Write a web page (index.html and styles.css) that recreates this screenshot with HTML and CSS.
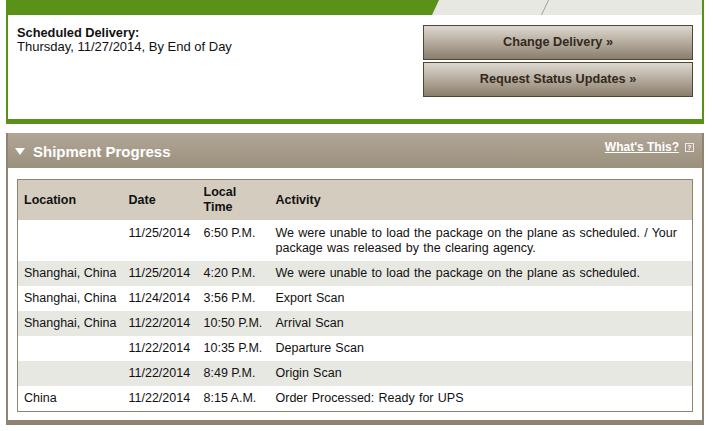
FILE: index.html
```html
<!DOCTYPE html>
<html>
<head>
<meta charset="utf-8">
<link rel="stylesheet" href="styles.css">
</head>
<body>
<div class="page">
  <div class="delivery-box">
    <svg class="topbar" width="694" height="15" viewBox="0 0 694 15">
      <rect x="0" y="0" width="694" height="15" fill="#e8e8e3"/>
      <polygon points="0,0 431,0 424,15 0,15" fill="#5a9119"/>
      <line x1="540.5" y1="0" x2="533.5" y2="15" stroke="#a59f95" stroke-width="1"/>
    </svg>
    <div class="delivery-content">
      <div class="sched">
        <div class="sched-title">Scheduled Delivery:</div>
        <div class="sched-date">Thursday, 11/27/2014, By End of Day</div>
      </div>
      <div class="buttons">
        <div class="btn">Change Delivery »</div>
        <div class="btn">Request Status Updates »</div>
      </div>
    </div>
  </div>

  <div class="progress">
    <div class="progress-head">
      <div class="title"><span class="tri"></span>Shipment Progress</div>
      <div class="whats"><span class="whats-link">What's This?</span><span class="qbox">?</span></div>
    </div>
    <div class="progress-body">
      <table class="ptable">
        <colgroup>
          <col class="c1"><col class="c2"><col class="c3"><col class="c4">
        </colgroup>
        <thead>
          <tr><th>Location</th><th>Date</th><th>Local<br>Time</th><th>Activity</th></tr>
        </thead>
        <tbody>
          <tr><td></td><td>11/25/2014</td><td>6:50 P.M.</td><td class="act">We were unable to load the package on the plane as scheduled. / Your package was released by the clearing agency.</td></tr>
          <tr class="alt"><td>Shanghai, China</td><td>11/25/2014</td><td>4:20 P.M.</td><td class="act">We were unable to load the package on the plane as scheduled.</td></tr>
          <tr><td>Shanghai, China</td><td>11/24/2014</td><td>3:56 P.M.</td><td class="act">Export Scan</td></tr>
          <tr class="alt"><td>Shanghai, China</td><td>11/22/2014</td><td>10:50 P.M.</td><td class="act">Arrival Scan</td></tr>
          <tr><td></td><td>11/22/2014</td><td>10:35 P.M.</td><td class="act">Departure Scan</td></tr>
          <tr class="alt"><td></td><td>11/22/2014</td><td>8:49 P.M.</td><td class="act">Origin Scan</td></tr>
          <tr><td>China</td><td>11/22/2014</td><td>8:15 A.M.</td><td class="act">Order Processed: Ready for UPS</td></tr>
        </tbody>
      </table>
    </div>
  </div>
</div>
</body>
</html>
```

FILE: styles.css
```css
html, body {
  margin: 0;
  padding: 0;
  background: #ffffff;
}
body {
  font-family: "Liberation Sans", Arial, Helvetica, sans-serif;
  font-size: 12.5px;
  line-height: 15px;
  color: #111;
}
.page {
  width: 698px;
  padding-left: 6px;
}
.delivery-box {
  border-left: 2px solid #5a9119;
  border-right: 2px solid #5a9119;
  border-bottom: 5px solid #5a9119;
}
.topbar {
  display: block;
}
.delivery-content {
  display: flex;
  justify-content: space-between;
  padding: 10px 9px 22px 9px;
}
.sched {
  padding-top: 1px;
  font-size: 13px;
  line-height: 14px;
}
.sched-title {
  font-weight: bold;
  font-size: 12.8px;
}
.buttons {
  display: flex;
  flex-direction: column;
  gap: 2px;
  width: 270px;
}
.btn {
  box-sizing: border-box;
  height: 35px;
  border: 1px solid #4e4534;
  background: linear-gradient(to bottom, #ddd8cf 0%, #b9b0a3 45%, #8a7e6c 100%);
  color: #33291d;
  font-size: 12.7px;
  font-weight: bold;
  display: flex;
  align-items: center;
  justify-content: center;
}
.progress {
  margin-top: 9px;
  border-left: 2px solid #8f8472;
  border-right: 2px solid #8f8472;
  border-bottom: 5px solid #8f8472;
}
.progress-head {
  height: 35px;
  background: linear-gradient(to bottom, #b2a797 0%, #9b8f7d 100%);
  display: flex;
  justify-content: space-between;
  align-items: flex-start;
  color: #fff;
}
.title {
  display: flex;
  align-items: center;
  font-size: 15px;
  font-weight: bold;
  height: 36px;
  padding-left: 7px;
}
.tri {
  width: 0;
  height: 0;
  border-left: 5px solid transparent;
  border-right: 5px solid transparent;
  border-top: 7px solid #fff;
  margin-right: 8px;
  margin-top: 1px;
}
.whats {
  display: flex;
  align-items: center;
  margin-top: 7px;
  padding-right: 8px;
  font-size: 12px;
  font-weight: bold;
}
.whats-link {
  text-decoration: underline;
}
.qbox {
  box-sizing: border-box;
  width: 9px;
  height: 9px;
  border: 1px solid #eeeae4;
  font-size: 7px;
  line-height: 7px;
  text-align: center;
  margin-left: 6px;
  color: #fff;
  font-weight: bold;
}
.progress-body {
  padding: 11px 9px 8px 9px;
}
.ptable {
  width: 676px;
  border-collapse: collapse;
  border: 1px solid #8f8472;
  table-layout: fixed;
}
.c1 { width: 105px; }
.c2 { width: 75px; }
.c3 { width: 72px; }
.ptable th {
  background: #d3ccbf;
  text-align: left;
  font-weight: bold;
  padding: 5px 6px;
  vertical-align: middle;
}
.ptable td {
  padding: 5px 6px;
  vertical-align: top;
  white-space: nowrap;
}
.ptable td.act {
  white-space: normal;
  word-spacing: 0.8px;
}
.ptable tbody tr:first-child td {
  padding-top: 6px;
}
.ptable tr.alt td {
  background: #e8e8e3;
}
```
